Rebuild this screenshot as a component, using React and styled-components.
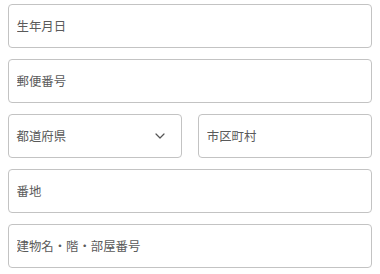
import styled, { createGlobalStyle } from "styled-components";

const GlobalStyle = createGlobalStyle`
  body {
    margin: 0;
    background: #fff;
    font-family: "Noto Sans CJK JP", "Noto Sans", sans-serif;
  }
`;

const Form = styled.form`
  display: flex;
  flex-direction: column;
  gap: 11px;
  padding: 4px 8px 0 7.5px;
  width: 380px;
  box-sizing: border-box;
`;

const Row = styled.div`
  display: grid;
  grid-template-columns: 1fr 1fr;
  gap: 16px;
`;

const Input = styled.input`
  box-sizing: border-box;
  width: 100%;
  height: 44px;
  padding: 0 8px;
  border: 1px solid #c3c3c3;
  border-radius: 4px;
  font-family: inherit;
  font-size: 12.4px;
  color: #333;
  outline: none;
  &::placeholder {
    color: #5a5a5a;
  }
`;

const Select = styled.div`
  box-sizing: border-box;
  height: 44px;
  padding: 0 16px 0 8px;
  border: 1px solid #c3c3c3;
  border-radius: 4px;
  display: flex;
  align-items: center;
  justify-content: space-between;
  font-size: 12.4px;
  color: #5a5a5a;
`;

const Chevron = () => (
  <svg width="10" height="6" viewBox="0 0 10 6" fill="none">
    <polyline
      points="1,1 5,5 9,1"
      stroke="#555"
      strokeWidth="1.2"
      strokeLinecap="round"
      strokeLinejoin="round"
    />
  </svg>
);

const App = () => {
  return (
    <>
      <GlobalStyle />
      <Form>
        <Input placeholder="生年月日" />
        <Input placeholder="郵便番号" />
        <Row>
          <Select>
            <span>都道府県</span>
            <Chevron />
          </Select>
          <Input placeholder="市区町村" />
        </Row>
        <Input placeholder="番地" />
        <Input placeholder="建物名・階・部屋番号" />
      </Form>
    </>
  );
};

export default App;
